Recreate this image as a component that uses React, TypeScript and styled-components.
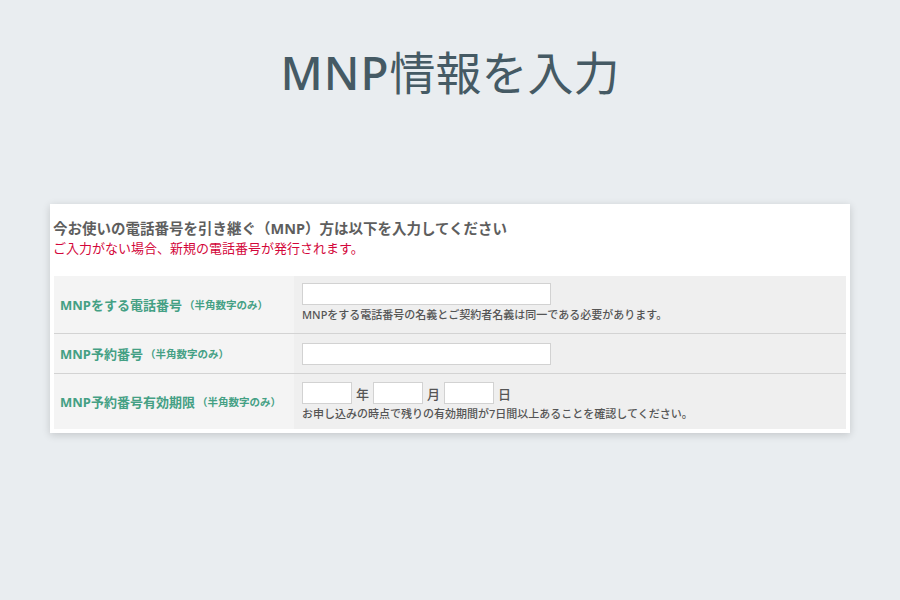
import React from "react";
import styled, { createGlobalStyle } from "styled-components";

const GlobalStyle = createGlobalStyle`
  html, body {
    margin: 0;
    padding: 0;
    background: #e9edf0;
  }
  body {
    font-family: "Noto Sans", "Noto Sans CJK JP", sans-serif;
  }
`;

const Page = styled.div`
  width: 900px;
  height: 600px;
  display: flex;
  flex-direction: column;
  align-items: center;
`;

const Title = styled.h1`
  margin: 44px 0 0;
  font-family: "Noto Sans", "Noto Sans CJK JP", sans-serif;
  font-size: 46px;
  line-height: 56px;
  font-weight: 400;
  color: #455a64;
`;

const TitleLatin = styled.span`
  font-weight: 500;
  letter-spacing: 1px;
`;

const Card = styled.div`
  margin-top: 104px;
  width: 800px;
  box-sizing: border-box;
  background: #ffffff;
  padding: 0 4px 4px;
  box-shadow: 0 2px 8px rgba(0, 0, 0, 0.16);
`;

const Intro = styled.div`
  padding: 14px 0 18px;
  margin-left: -1px;
`;

const Lead = styled.p`
  margin: 0;
  font-size: 14.5px;
  line-height: 20px;
  font-weight: 700;
  color: #5e5e5e;
`;

const Warning = styled.p`
  margin: 0;
  font-size: 13px;
  line-height: 20px;
  font-weight: 400;
  color: #d3063a;
`;

const Table = styled.div`
  display: flex;
  flex-direction: column;
`;

const Row = styled.div<{ $first?: boolean }>`
  display: grid;
  grid-template-columns: 240px 1fr;
  border-top: ${({ $first }) => ($first ? "none" : "1px solid #d3d3d3")};
`;

const LabelCell = styled.div`
  background: #f4f4f4;
  display: flex;
  align-items: center;
  padding: 0 6px;
  font-size: 13px;
  font-weight: 700;
  color: #44a084;
`;

const Hint = styled.span`
  font-size: 10.5px;
  margin-left: 2px;
`;

const ValueCell = styled.div<{ $pad: string }>`
  background: #efefef;
  padding: ${({ $pad }) => $pad};
  display: flex;
  flex-direction: column;
  gap: 2px;
`;

const TextInput = styled.input<{ $w: number }>`
  box-sizing: border-box;
  width: ${({ $w }) => $w}px;
  height: 22px;
  margin: 0;
  border: 1px solid #d2d2d2;
  background: #ffffff;
  padding: 0 4px;
  outline: none;
`;

const DateLine = styled.div`
  display: flex;
  align-items: center;
  gap: 4px;
`;

const Unit = styled.span`
  font-size: 13px;
  font-weight: 500;
  color: #555;
`;

const Note = styled.div`
  font-size: 11px;
  line-height: 16px;
  font-weight: 500;
  color: #555;
`;

export default function App() {
  return (
    <>
      <GlobalStyle />
      <Page>
        <Title>
          <TitleLatin>MNP</TitleLatin>情報を入力
        </Title>
        <Card>
          <Intro>
            <Lead>今お使いの電話番号を引き継ぐ（MNP）方は以下を入力してください</Lead>
            <Warning>ご入力がない場合、新規の電話番号が発行されます。</Warning>
          </Intro>
          <Table>
            <Row $first>
              <LabelCell>
                MNPをする電話番号<Hint>（半角数字のみ）</Hint>
              </LabelCell>
              <ValueCell $pad="7px 8px 10px">
                <TextInput $w={249} />
                <Note>MNPをする電話番号の名義とご契約者名義は同一である必要があります。</Note>
              </ValueCell>
            </Row>
            <Row>
              <LabelCell>
                MNP予約番号<Hint>（半角数字のみ）</Hint>
              </LabelCell>
              <ValueCell $pad="9px 8px 8px">
                <TextInput $w={249} />
              </ValueCell>
            </Row>
            <Row>
              <LabelCell>
                MNP予約番号有効期限<Hint>（半角数字のみ）</Hint>
              </LabelCell>
              <ValueCell $pad="8px 8px 7px">
                <DateLine>
                  <TextInput $w={50} />
                  <Unit>年</Unit>
                  <TextInput $w={50} />
                  <Unit>月</Unit>
                  <TextInput $w={50} />
                  <Unit>日</Unit>
                </DateLine>
                <Note>お申し込みの時点で残りの有効期間が7日間以上あることを確認してください。</Note>
              </ValueCell>
            </Row>
          </Table>
        </Card>
      </Page>
    </>
  );
}
